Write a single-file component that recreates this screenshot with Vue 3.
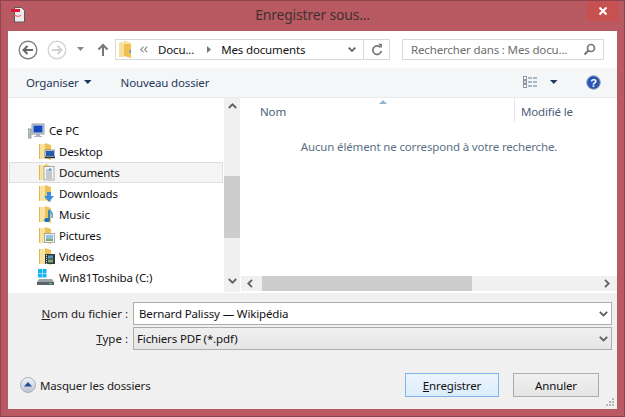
<script setup>
const items = [
  { name: 'Desktop', kind: 'desktop' },
  { name: 'Documents', kind: 'documents', active: true },
  { name: 'Downloads', kind: 'downloads' },
  { name: 'Music', kind: 'music' },
  { name: 'Pictures', kind: 'pictures' },
  { name: 'Videos', kind: 'videos' }
]
</script>

<template>
  <div class="window">
    <header class="titlebar">
      <svg class="app-icon" width="16" height="16" viewBox="0 0 16 16">
        <path d="M4.500 .5h7l3 3v11.500h-10z" fill="#ecebeb" stroke="#5a5a5a" />
        <rect x="1" y="2" width="9" height="3" fill="#e01535" />
        <path d="M5 8c2 2 4 2 6 0" fill="none" stroke="#ef7f95" stroke-width="1.500" />
      </svg>
      <h1 class="title">Enregistrer sous...</h1>
      <button class="close">
        <svg width="10" height="10" viewBox="0 0 10 10"><path d="M1.500 1.500l7 7M8.500 1.500l-7 7" stroke="#fff" stroke-width="2" /></svg>
      </button>
    </header>

    <main class="client">
      <nav class="navbar">
        <svg class="nav-round" width="20" height="20" viewBox="0 0 20 20">
          <circle cx="10" cy="10" r="8.800" fill="#fff" stroke="#7f7f7f" stroke-width="1.400" />
          <path d="M15 10H6M9.500 6L5.500 10l4 4" fill="none" stroke="#666" stroke-width="2" />
        </svg>
        <svg class="nav-round fwd" width="20" height="20" viewBox="0 0 20 20">
          <circle cx="10" cy="10" r="8.800" fill="#fff" stroke="#d4d4d4" stroke-width="1.400" />
          <path d="M5 10h9M10.500 6l4 4-4 4" fill="none" stroke="#d0d0d0" stroke-width="2" />
        </svg>
        <svg class="nav-drop" width="8" height="5" viewBox="0 0 8 5"><path d="M0 0h7L3.500 4z" fill="#888" /></svg>
        <svg class="nav-up" width="12" height="14" viewBox="0 0 12 14"><path d="M6 13V3M1.500 6.500L6 2l4.500 4.500" fill="none" stroke="#777" stroke-width="2" /></svg>

        <div class="address">
          <svg class="addr-folder" width="14" height="17" viewBox="0 0 14 17">
            <path d="M0 1h5v15H0z" fill="#f7e09a" />
            <path d="M5 0l7 2v15l-7-2z" fill="#efc04f" />
            <path d="M0 1h6l6 1v1H0z" fill="#f9e7a8" />
            <rect x="10.500" y="9" width="1.500" height="3" fill="#5d9bd0" />
          </svg>
          <svg class="chev" width="8" height="7" viewBox="0 0 8 7"><path d="M3.500.700L.8 3.500l2.700 2.800M7.300.700L4.600 3.500l2.700 2.800" fill="none" stroke="#8a8a8a" stroke-width="1.100" /></svg>
          <span class="crumb">Docu...</span>
          <svg class="crumb-arrow" width="5" height="7" viewBox="0 0 5 7"><path d="M0 0l4 3.500L0 7z" fill="#777" /></svg>
          <span class="crumb">Mes documents</span>
          <span class="grow"></span>
          <svg class="addr-drop" width="8" height="6" viewBox="0 0 8 6"><path d="M.7.700L4 4l3.300-3.300" fill="none" stroke="#666" stroke-width="1.800" /></svg>
          <span class="refresh">
            <svg width="12" height="13" viewBox="0 0 12 13">
              <path d="M9.500 4.500A4.300 4.300 0 1 0 10.300 8" fill="none" stroke="#777" stroke-width="1.700" />
              <path d="M7 .500l4 .500v4z" fill="#777" />
            </svg>
          </span>
        </div>

        <div class="search">
          <span class="search-text">Rechercher dans : Mes docu...</span>
          <svg width="13" height="13" viewBox="0 0 13 13">
            <circle cx="8" cy="5" r="3.500" fill="none" stroke="#777" stroke-width="1.700" />
            <path d="M5.500 7.500L1.500 11.500" stroke="#777" stroke-width="2.200" />
          </svg>
        </div>
      </nav>

      <div class="toolbar">
        <span class="tool">Organiser</span>
        <svg class="tool-arrow" width="8" height="5" viewBox="0 0 8 5"><path d="M0 0h7.500L3.750 4z" fill="#1e395b" /></svg>
        <span class="tool new-folder">Nouveau dossier</span>
        <span class="grow"></span>
        <svg class="view-icon" width="16" height="13" viewBox="0 0 16 13">
          <g fill="#fff" stroke="#8a97a8"><rect x=".500" y=".500" width="3" height="3" /><rect x=".500" y="4.500" width="3" height="3" /><rect x=".500" y="8.500" width="3" height="3" /></g>
          <rect x="1.500" y="5.500" width="1" height="1" fill="#d22" />
          <path d="M5 2h10M5 6h10M5 10h10" stroke="#5f7896" stroke-dasharray="4 1" />
        </svg>
        <svg class="view-arrow" width="8" height="5" viewBox="0 0 8 5"><path d="M0 0h7.500L3.750 4z" fill="#1e395b" /></svg>
        <svg class="help" width="15" height="15" viewBox="0 0 15 15">
          <circle cx="7.500" cy="7.500" r="6.800" fill="#2a55b5" stroke="#9aa6b8" />
          <text x="7.500" y="11.500" text-anchor="middle" class="help-q">?</text>
        </svg>
      </div>

      <section class="panes">
        <aside class="tree">
          <div class="tree-row pc">
            <svg class="icon" width="17" height="16" viewBox="0 0 17 16">
              <rect x="0" y="6" width="3" height="9" fill="#c4cbc9" stroke="#667" stroke-width=".6" />
              <rect x="1" y="11" width="1" height="1" fill="#3c3" />
              <rect x="4" y="1" width="12" height="10" fill="#d8dde2" stroke="#7c8690" stroke-width=".8" />
              <rect x="5.500" y="2.500" width="9" height="7" fill="#1448c0" />
              <path d="M8 11h4v2h2v1H6v-1h2z" fill="#aab1b8" />
            </svg>
            <span>Ce PC</span>
          </div>
          <div v-for="item in items" :key="item.name" class="tree-row child" :class="{ active: item.active }">
            <svg class="icon" width="16" height="17" viewBox="0 0 16 17">
              <path d="M0 1h6v15H0z" fill="#f7e3a0" />
              <path d="M0 16V1h1v15z" fill="#e3b54f" />
              <path d="M6 0l6 2v15l-6-2z" fill="#eec258" />
              <g v-if="item.kind === 'desktop'">
                <rect x="6" y="7" width="10" height="8" fill="#e0e4e8" stroke="#556" stroke-width=".6" />
                <rect x="7" y="8" width="8" height="5" fill="#1d5fae" />
                <rect x="6" y="13.500" width="10" height="1.500" fill="#30343a" />
              </g>
              <g v-else-if="item.kind === 'documents'">
                <rect x="5" y="2.500" width="10" height="13.500" fill="#f4f5f6" stroke="#8a8f96" stroke-width=".7" />
                <path d="M7 6h6M7 8h6M7 10h6M7 12h6M7 14h6" stroke="#7a8590" stroke-width=".8" />
                <rect x="10" y="4.500" width="2" height="2" fill="#3d8bd0" />
              </g>
              <g v-else-if="item.kind === 'downloads'">
                <path d="M8 7h4v4h3l-5 6-5-6h3z" fill="#3a8fdc" />
              </g>
              <g v-else-if="item.kind === 'music'">
                <path d="M10 4v10" stroke="#1c72c0" stroke-width="1.600" />
                <path d="M10 4c3 2 4 4 3 8" fill="none" stroke="#3aa0e0" stroke-width="1.600" />
                <ellipse cx="8" cy="14" rx="2.800" ry="2" fill="#1c72c0" />
              </g>
              <g v-else-if="item.kind === 'pictures'">
                <rect x="5.500" y="6.500" width="10" height="9" fill="#eef0ef" stroke="#8c9298" stroke-width=".7" />
                <rect x="7" y="8" width="7" height="4" fill="#8fc5dc" />
                <rect x="7" y="12" width="7" height="2" fill="#7fa872" />
              </g>
              <g v-else-if="item.kind === 'videos'">
                <rect x="6" y="6" width="10" height="10" fill="#2f3a42" />
                <rect x="9" y="7.500" width="5" height="3" fill="#5f95b8" />
                <rect x="9" y="11.500" width="5" height="3" fill="#7fa872" />
                <path d="M7.500 7v9" stroke="#ddd" stroke-dasharray="1 1" />
              </g>
            </svg>
            <span>{{ item.name }}</span>
          </div>
          <div class="tree-row child">
            <svg class="icon drive" width="18" height="17" viewBox="0 0 18 17">
              <g fill="#18b5f0"><rect x="1" y="0" width="4" height="4" /><rect x="5.500" y="0" width="4" height="4" /><rect x="1" y="4.500" width="4" height="4" /><rect x="5.500" y="4.500" width="4" height="4" /></g>
              <path d="M2 10h13l2 3v3H0v-3z" fill="#9aa3a8" />
              <rect x="0" y="13" width="17" height="3" fill="#5a6468" />
              <rect x="12" y="14" width="3" height="1" fill="#5fd05f" />
            </svg>
            <span>Win81Toshiba (C:)</span>
          </div>
        </aside>

        <div class="vscroll">
          <svg class="sb-arrow" width="9" height="6" viewBox="0 0 9 6"><path d="M.8 5L4.500 1.300 8.200 5" fill="none" stroke="#606060" stroke-width="1.800" /></svg>
          <div class="vthumb"></div>
          <svg class="sb-arrow down" width="9" height="6" viewBox="0 0 9 6"><path d="M.8 1l3.700 3.700L8.200 1" fill="none" stroke="#606060" stroke-width="1.800" /></svg>
        </div>

        <div class="files">
          <div class="file-head">
            <span class="col name">Nom</span>
            <svg class="sort" width="8" height="5" viewBox="0 0 8 5"><path d="M4 0l4 4H0z" fill="#8fb6d0" /></svg>
            <span class="col modified">Modifié le</span>
          </div>
          <p class="empty">Aucun élément ne correspond à votre recherche.</p>
          <div class="hscroll">
            <svg width="6" height="9" viewBox="0 0 6 9"><path d="M5 .8L1.300 4.500 5 8.200" fill="none" stroke="#606060" stroke-width="1.800" /></svg>
            <div class="hthumb"></div>
            <span class="grow"></span>
            <svg width="6" height="9" viewBox="0 0 6 9"><path d="M1 .8l3.700 3.700L1 8.200" fill="none" stroke="#606060" stroke-width="1.800" /></svg>
          </div>
        </div>
      </section>

      <footer class="bottom">
        <div class="form-row first">
          <label class="label"><u>N</u>om du fichier :</label>
          <div class="field input">
            <span>Bernard Palissy — Wikipédia</span>
            <svg width="9" height="6" viewBox="0 0 9 6"><path d="M.8.800L4.500 4.500 8.200.800" fill="none" stroke="#606060" stroke-width="1.800" /></svg>
          </div>
        </div>
        <div class="form-row">
          <label class="label"><u>T</u>ype :</label>
          <div class="field combo">
            <span>Fichiers PDF (*.pdf)</span>
            <svg width="9" height="6" viewBox="0 0 9 6"><path d="M.8.800L4.500 4.500 8.200.800" fill="none" stroke="#606060" stroke-width="1.800" /></svg>
          </div>
        </div>
        <div class="actions">
          <svg class="toggle" width="16" height="16" viewBox="0 0 16 16">
            <defs><linearGradient id="tg" x1="0" y1="0" x2="0" y2="1"><stop offset="0" stop-color="#f2f4f8" /><stop offset="1" stop-color="#b9c3d2" /></linearGradient></defs>
            <circle cx="8" cy="8" r="7.500" fill="url(#tg)" stroke="#a9b2bf" />
            <path d="M8 5l4 4.500H4z" fill="#1f4a94" />
          </svg>
          <span class="toggle-text">Masquer les dossiers</span>
          <span class="grow"></span>
          <button class="btn primary"><u>E</u>nregistrer</button>
          <button class="btn cancel">Annuler</button>
        </div>
        <svg class="grip" width="8" height="8" viewBox="0 0 8 8"><g fill="#b5b5b5"><rect x="6" y="0" width="2" height="2" /><rect x="3" y="3" width="2" height="2" /><rect x="6" y="3" width="2" height="2" /><rect x="0" y="6" width="2" height="2" /><rect x="3" y="6" width="2" height="2" /><rect x="6" y="6" width="2" height="2" /></g></svg>
      </footer>
    </main>
  </div>
</template>

<style>
html, body { margin: 0; overflow: hidden; }
</style>

<style scoped>
.window {
  width: 625px;
  height: 417px;
  box-sizing: border-box;
  background: #b95a63;
  border: 1px solid #92444d;
  display: flex;
  flex-direction: column;
  font-family: "Noto Sans", "Open Sans", sans-serif;
  font-size: 11.5px;
  letter-spacing: -0.15px;
  color: #111;
}
.grow { flex: 1; }
.titlebar {
  height: 30px;
  flex: none;
  display: flex;
  align-items: flex-start;
  position: relative;
}
.app-icon { margin: 6px 0 0 9px; }
.title {
  position: absolute;
  left: 0;
  right: 0;
  top: 4px;
  margin: 0;
  text-align: center;
  font-size: 14px;
  letter-spacing: -0.2px;
  line-height: 20px;
  font-weight: 400;
  color: #42302f;
}
.close {
  position: absolute;
  right: 6px;
  top: 0;
  width: 31px;
  height: 20px;
  border: 0;
  padding: 0;
  background: #c75050;
  display: flex;
  align-items: center;
  justify-content: center;
}
.client {
  margin: 0 7px 7px;
  flex: 1;
  min-height: 0;
  display: flex;
  flex-direction: column;
  background: #f0f0f0;
}
.navbar {
  height: 37px;
  flex: none;
  background: #fff;
  display: flex;
  align-items: center;
  padding-left: 10px;
}
.fwd { margin-left: 9px; }
.nav-drop { margin-left: 10px; }
.nav-up { margin-left: 12px; }
.address {
  margin-left: 6px;
  width: 275px;
  height: 21px;
  box-sizing: border-box;
  border: 1px solid #d9d9d9;
  display: flex;
  align-items: center;
  padding-left: 3px;
}
.addr-folder { flex: none; }
.chev { margin-left: 7px; margin-right: 10px; flex: none; }
.crumb { white-space: nowrap; }
.crumb-arrow { margin: 0 9px 0 13px; }
.addr-drop { margin-right: 7px; }
.refresh {
  width: 25px;
  height: 19px;
  border-left: 1px solid #d9d9d9;
  display: flex;
  align-items: center;
  justify-content: center;
}
.search {
  margin-left: 12px;
  width: 202px;
  height: 21px;
  box-sizing: border-box;
  border: 1px solid #d9d9d9;
  display: flex;
  align-items: center;
  justify-content: space-between;
  padding: 0 7px 0 8px;
  color: #6d6d6d;
}
.toolbar {
  height: 30px;
  flex: none;
  box-sizing: border-box;
  background: #f5f6f7;
  border-bottom: 1px solid #e6ecf0;
  display: flex;
  align-items: center;
  padding-left: 18px;
}
.tool { color: #1e395b; }
.tool-arrow { margin-left: 5px; }
.new-folder { margin-left: 29px; }
.view-arrow { margin-left: 11px; }
.help { margin: 0 16px 0 28px; }
.help-q { font-size: 11px; font-weight: 700; fill: #fff; font-family: "Liberation Sans", sans-serif; }
.panes {
  height: 194px;
  flex: none;
  display: flex;
  background: #fff;
}
.tree {
  width: 216px;
  flex: none;
  padding-top: 22px;
  box-sizing: border-box;
}
.tree-row {
  height: 21px;
  display: flex;
  align-items: center;
  box-sizing: border-box;
  white-space: nowrap;
}
.pc { padding-left: 20px; }
.pc span { margin-left: 4px; }
.child { padding-left: 31px; }
.child span { margin-left: 4px; }
.drive { margin-left: -2px; }
.tree-row.active {
  background: #f5f5f5;
  border: 1px solid #dedede;
  margin-left: 1px;
  margin-right: 1px;
  padding-left: 29px;
}
.vscroll {
  width: 16px;
  flex: none;
  background: #f0f0f0;
  display: flex;
  flex-direction: column;
  align-items: center;
  position: relative;
}
.sb-arrow { margin-top: 5px; }
.sb-arrow.down { margin-top: 40px; }
.vthumb {
  width: 16px;
  height: 62px;
  margin-top: 67px;
  background: #cdcdcd;
}
.files {
  flex: 1;
  margin-left: 1px;
  min-width: 0;
  display: flex;
  flex-direction: column;
  position: relative;
  overflow: hidden;
}
.file-head {
  height: 24px;
  flex: none;
  display: flex;
  align-items: flex-end;
  position: relative;
  color: #4c607a;
  box-sizing: border-box;
}
.col { line-height: 20px; white-space: nowrap; }
.name { margin-left: 19px; width: 254px; }
.modified {
  border-left: 1px solid #e3e8ee;
  padding-left: 6px;
  align-self: stretch;
  display: flex;
  align-items: flex-end;
}
.sort { position: absolute; left: 138px; top: 2px; }
.empty {
  margin: 0;
  flex: 1;
  padding-top: 16px;
  text-align: center;
  color: #5c6f86;
  line-height: 18px;
  white-space: nowrap;
}
.hscroll {
  height: 15px;
  flex: none;
  background: #f0f0f0;
  display: flex;
  align-items: center;
  padding: 0 7px 0 6px;
  margin-bottom: 1px;
}
.hthumb {
  width: 210px;
  height: 15px;
  margin-left: 9px;
  background: #cdcdcd;
}
.bottom {
  flex: 1;
  min-height: 0;
  position: relative;
  background: #f0f0f0;
  display: flex;
  flex-direction: column;
  padding-top: 9px;
  border-top: 1px solid #fff;
  box-sizing: border-box;
}
.form-row { display: flex; align-items: center; height: 23px; margin-bottom: 2px; }
.label { width: 120px; text-align: right; white-space: nowrap; color: #222; letter-spacing: 0; }
.field {
  margin-left: 5px;
  width: 479px;
  height: 23px;
  box-sizing: border-box;
  border: 1px solid #adadad;
  display: flex;
  align-items: center;
  justify-content: space-between;
  padding-right: 3px;
}
.input { background: #fff; padding-left: 5px; }
.combo { background: linear-gradient(#f0f0f0, #e5e5e5); padding-left: 3px; }
.actions {
  display: flex;
  align-items: center;
  margin-top: 21px;
  height: 24px;
  padding: 0 18px 0 12px;
}
.toggle-text { margin-left: 4px; color: #222; }
.btn {
  height: 24px;
  box-sizing: border-box;
  font: inherit;
  letter-spacing: inherit;
  color: #111;
  padding: 0;
}
.primary {
  width: 94px;
  border: 1px solid #7eb4ea;
  background: linear-gradient(#ecf4fc, #dcecfc);
}
.cancel {
  width: 86px;
  margin-left: 14px;
  border: 1px solid #adadad;
  background: linear-gradient(#f0f0f0, #e5e5e5);
}
.grip { position: absolute; right: 3px; bottom: 3px; }
</style>
